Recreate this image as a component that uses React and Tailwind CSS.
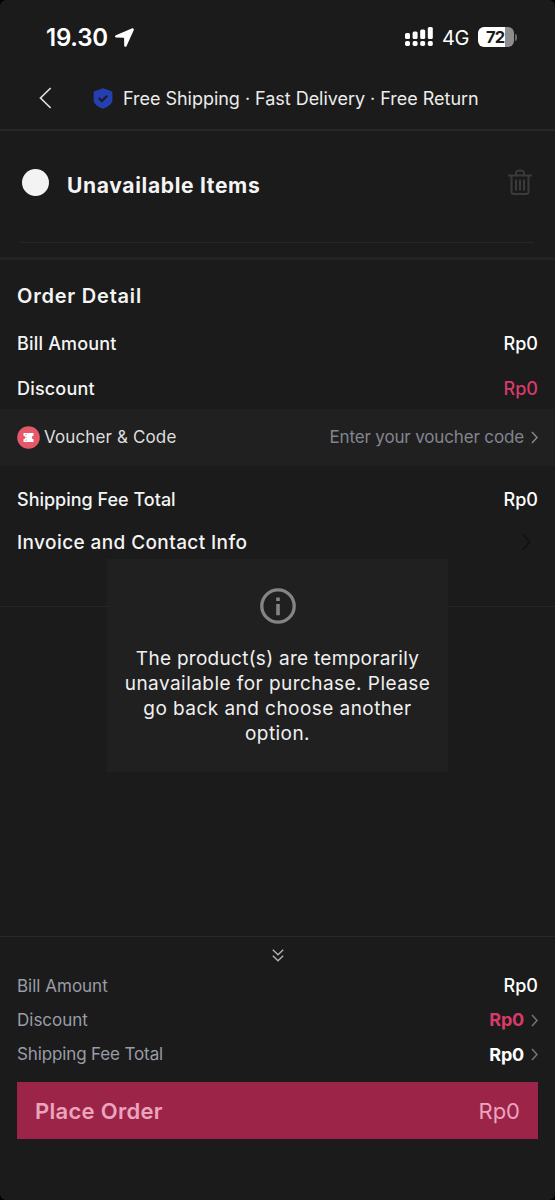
const Chevron = ({ className, d = "M1 1l5 5.5L1 12", w = 7, h = 13, sw = 1.5 }) => (
  <svg width={w} height={h} viewBox={`0 0 ${w} ${h}`} fill="none" stroke="currentColor" strokeWidth={sw} className={className}>
    <path d={d} />
  </svg>
);

function StatusBar() {
  return (
    <div className="flex h-[74px] items-center justify-between pl-[46px] pr-[38px] text-white">
      <div className="flex items-center gap-[7px] pt-[1px]">
        <span className="text-[24px] font-semibold leading-none tracking-[-0.25px]">19.30</span>
        <svg width="19" height="19" viewBox="0 0 19 19" className="fill-white">
          <path d="M16.700.4.900 7.300C-.3 7.900-.1 9.400 1.200 9.500l7.400.3c.3 0 .5.2.5.5l.1 7.200c0 1.500 1.800 1.700 2.400.4L18.700 2.200C19.200.9 18.100-.200 16.700.4z" />
        </svg>
      </div>
      <div className="flex items-center">
        <svg width="28" height="20" viewBox="0 0 28 20" className="fill-white">
          <rect x="0" y="6" width="5" height="6" rx="1.500" />
          <rect x="7.600" y="4.500" width="5" height="7.500" rx="1.500" />
          <rect x="15.200" y="2.500" width="5" height="9.500" rx="1.500" />
          <rect x="22.800" y="0" width="5" height="12" rx="1.500" />
          <rect x="0" y="14" width="5" height="5" rx="1.700" />
          <rect x="7.600" y="14" width="5" height="5" rx="1.700" />
          <rect x="15.200" y="14" width="5" height="5" rx="1.700" />
          <rect x="22.800" y="14" width="5" height="5" rx="1.700" />
        </svg>
        <span className="ml-[9px] pt-[1px] text-[20px] leading-none tracking-[-0.4px]">4G</span>
        <div className="ml-[9px] flex h-[20px] w-[36px] items-center rounded-[6px] bg-linear-to-r from-white from-74% to-[#8e8e8e] to-74% pl-[8px] text-[16.5px] font-bold leading-none tracking-[-0.8px] text-[#1b1b1b]">
          72
        </div>
        <div className="ml-[1px] h-[7px] w-[2px] rounded-r-full bg-[#6b6b6b]" />
      </div>
    </div>
  );
}

function Header() {
  return (
    <div className="flex h-[55px] items-center pb-[7px] pl-[39px]">
      <svg width="13" height="22" viewBox="0 0 13 22" fill="none" stroke="#dcdcdc" strokeWidth="1.700">
        <path d="M11.700 1 1.500 11l10.200 10" />
      </svg>
      <svg width="20" height="21" viewBox="0 0 20 21" className="ml-[41px]">
        <path d="M10 .3 18.500 3.200q.9.300.9 1.300V12c0 4.200-4.500 6.800-9.400 8.700C5.100 18.800.6 16.200.6 12V4.500q0-1 .9-1.300z" fill="#2440b0" />
        <path d="m5.800 10 3 3 5.400-5.200" fill="none" stroke="#1b1b1b" strokeWidth="2" />
      </svg>
      <span className="ml-[10px] pt-[2px] text-[18px] leading-none tracking-[-0.03px] text-[#ececec]">
        Free Shipping · Fast Delivery · Free Return
      </span>
    </div>
  );
}

function Unavailable() {
  return (
    <div className="border-t-2 border-[#27282d]">
      <div className="mx-[21px] flex h-[112px] items-center border-b border-[#272727] pb-[9px]">
        <div className="ml-[1px] size-[27px] rounded-full bg-[#f3f3f3]" />
        <h2 className="ml-[18px] mt-[6px] text-[21px] font-bold leading-none tracking-[0.67px] text-[#f4f4f4]">Unavailable Items</h2>
        <svg width="24" height="27" viewBox="0 0 24 27" fill="none" stroke="#3a3a3a" strokeWidth="2" className="ml-auto mr-[2px]">
          <path d="M0 6.500h24M3.500 6.500v16.500q0 2 2 2h13q2 0 2-2V6.500M8 6V4q0-2.500 4-2.500T16 4v2M8 10.500v11M12 10.500v11M16 10.500v11" />
        </svg>
      </div>
      <div className="h-[14px]" />
    </div>
  );
}

function OrderDetail() {
  return (
    <div className="border-t-3 border-b border-t-[#232323] border-b-[#272727] pt-[12px] text-[18px] font-medium leading-none text-[#f4f4f4]">
      <h2 className="flex h-[48px] items-center px-[17px] text-[20px] font-semibold tracking-[0.78px]">Order Detail</h2>
      <div className="flex h-[47px] items-center justify-between px-[17px]">
        <span className="tracking-[0.18px]">Bill Amount</span>
        <span className="text-white">Rp0</span>
      </div>
      <div className="flex h-[42px] items-center justify-between px-[17px] pt-[2px]">
        <span className="tracking-[0.18px]">Discount</span>
        <span className="text-[#d83a68]">Rp0</span>
      </div>
      <div className="flex h-[57px] items-center bg-[#202020] px-[17px] font-normal">
        <svg width="23" height="23" viewBox="0 0 23 23">
          <circle cx="11.500" cy="11.500" r="11.300" fill="#e5586a" />
          <path d="M6.500 7h10v2.800a1.600 1.600 0 0 0 0 3.400V16h-10v-2.800a1.600 1.600 0 0 0 0-3.400z" fill="#fff" />
          <path d="M9 8v7" stroke="#e5586a" strokeWidth=".7" strokeDasharray="1.400 1.400" />
        </svg>
        <span className="ml-[4px] text-[17px] tracking-[0.13px] text-[#dedede]">Voucher &amp; Code</span>
        <span className="ml-auto text-[17px] tracking-[-0.15px] text-[#83858f]">Enter your voucher code</span>
        <Chevron className="ml-[7px] text-[#83858f]" />
      </div>
      <div className="flex h-[56px] items-center justify-between px-[17px] pt-[12px]">
        <span>Shipping Fee Total</span>
        <span className="text-white">Rp0</span>
      </div>
      <div className="flex h-[40px] items-center justify-between pl-[17px] pr-[24px]">
        <span className="text-[19px] tracking-[0.4px]">Invoice and Contact Info</span>
        <Chevron className="text-[#111111]" w={9} h={18} d="M.7 1l7 8-7 8" />
      </div>
      <div className="h-[44px]" />
    </div>
  );
}

function Toast() {
  return (
    <div className="absolute left-[107px] top-[559px] flex h-[213px] w-[341px] flex-col items-center bg-[#202020] pt-[29px]">
      <svg width="36" height="36" viewBox="0 0 36 36" fill="none">
        <circle cx="18" cy="18" r="16.200" stroke="#848484" strokeWidth="3.300" />
        <path d="M16.200 9.500h3.600v3.600h-3.600zM16.200 16h3.600v11.200h-3.600z" fill="#848484" />
      </svg>
      <p className="mt-[22px] text-center text-[19px] leading-[25px] tracking-[0.45px] text-[#f0f0f0]">
        <span className="tracking-[0.28px]">The product(s) are temporarily</span>
        <br />
        unavailable for purchase. Please
        <br />
        go back and choose another
        <br />
        option.
      </p>
    </div>
  );
}

function Summary() {
  return (
    <div className="h-[264px] border-t border-[#292929] px-[17px] leading-none">
      <div className="flex h-[32px] items-center justify-center pt-[5px]">
        <svg width="12" height="13" viewBox="0 0 12 13" fill="none" stroke="#b2b2b2" strokeWidth="1.400">
          <path d="M.8.800 6 5.800 11.200.800M.8 6.800 6 11.800l5.200-5" />
        </svg>
      </div>
      <div className="flex h-[34px] items-center justify-between text-[17px] text-[#9a9ca6]">
        <span>Bill Amount</span>
        <span className="text-[18px] font-medium text-white">Rp0</span>
      </div>
      <div className="flex h-[34px] items-center text-[17px] text-[#9a9ca6]">
        <span>Discount</span>
        <span className="ml-auto text-[18px] font-bold tracking-[-0.2px] text-[#d83a68]">Rp0</span>
        <Chevron className="ml-[7px] text-[#73757b]" />
      </div>
      <div className="flex h-[35px] items-center text-[17px] text-[#9a9ca6]">
        <span className="tracking-[-0.13px]">Shipping Fee Total</span>
        <span className="ml-auto text-[18px] font-bold tracking-[-0.2px] text-white">Rp0</span>
        <Chevron className="ml-[7px] text-[#73757b]" />
      </div>
      <button className="mt-[10px] flex h-[57px] w-full items-center justify-between bg-[#9d2449] px-[18px] text-[22px] text-[#eaa5bd]">
        <span className="font-semibold tracking-[0.3px]">Place Order</span>
        <span>Rp0</span>
      </button>
    </div>
  );
}

export default function App() {
  return (
    <div className="h-[1200px] w-[555px] overflow-hidden bg-black font-['Inter','Liberation_Sans',sans-serif]">
      <div className="relative flex h-full flex-col overflow-hidden rounded-[6px] bg-[#1b1b1b]">
        <StatusBar />
        <Header />
        <Unavailable />
        <OrderDetail />
        <div className="flex-1" />
        <Summary />
        <Toast />
      </div>
    </div>
  );
}
